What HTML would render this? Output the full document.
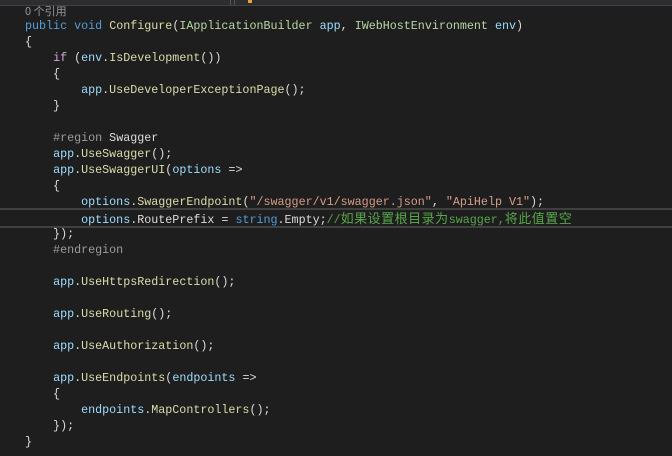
<!DOCTYPE html>
<html><head><meta charset="utf-8"><style>
body{margin:0;width:672px;height:455px;background:#1e1e1e;overflow:hidden;position:relative;font-family:"Liberation Mono","Noto Sans CJK SC",monospace;font-size:11.7px;color:#dcdcdc}
.top{position:absolute;left:0;top:0;width:672px;height:5px;background:#2d2d30;border-bottom:1px solid #3f3f46}
.w{position:absolute;left:0;top:1px;width:672px;height:455px}
.l{position:absolute;left:25px;height:16px;line-height:16px;white-space:pre}
.k{color:#569cd6}.c{color:#d8a0df}.t{color:#b8d7a3}.m{color:#dcdcaa}.v{color:#9cdcfe}.s{color:#d69d85}.g{color:#57a64a}.p{color:#9b9b9b}
.cj{font-family:"Noto Sans CJK SC",sans-serif;font-size:13px;letter-spacing:0.5px}
.hl{position:absolute;left:0;top:207px;width:672px;height:16px;border-top:2px solid #404040;border-bottom:2px solid #404040}
</style></head><body>
<div class="top"></div>
<div style="position:absolute;left:230px;top:0;width:1px;height:5px;background:#555"></div>
<div style="position:absolute;left:234px;top:0;width:1px;height:5px;background:#555"></div>
<div style="position:absolute;left:248px;top:0;width:4px;height:3px;background:#e8a33a"></div>
<div class="w">
<div class="l cj" style="top:2px;font-size:11px;color:#999;letter-spacing:0">0 个引用</div>
<div class="hl"></div>
<div class="l" style="top:17px"><span class="k">public</span> <span class="k">void</span> <span class="m">Configure</span>(<span class="t">IApplicationBuilder</span> <span class="v">app</span>, <span class="t">IWebHostEnvironment</span> <span class="v">env</span>)</div>
<div class="l" style="top:33px">{</div>
<div class="l" style="top:49px">    <span class="c">if</span> (<span class="v">env</span>.<span class="m">IsDevelopment</span>())</div>
<div class="l" style="top:65px">    {</div>
<div class="l" style="top:81px">        <span class="v">app</span>.<span class="m">UseDeveloperExceptionPage</span>();</div>
<div class="l" style="top:97px">    }</div>
<div class="l" style="top:129px">    <span class="p">#region</span> Swagger</div>
<div class="l" style="top:145px">    <span class="v">app</span>.<span class="m">UseSwagger</span>();</div>
<div class="l" style="top:161px">    <span class="v">app</span>.<span class="m">UseSwaggerUI</span>(<span class="v">options</span> =&gt;</div>
<div class="l" style="top:177px">    {</div>
<div class="l" style="top:193px">        <span class="v">options</span>.<span class="m">SwaggerEndpoint</span>(<span class="s">"/swagger/v1/swagger.json"</span>, <span class="s">"ApiHelp V1"</span>);</div>
<div class="l" style="top:209px">        <span class="v">options</span>.RoutePrefix = <span class="k">string</span>.Empty;<span class="g">//<span class="cj">如果设置根目录为</span>swagger,<span class="cj">将此值置空</span></span></div>
<div class="l" style="top:225px">    });</div>
<div class="l p" style="top:241px">    #endregion</div>
<div class="l" style="top:273px">    <span class="v">app</span>.<span class="m">UseHttpsRedirection</span>();</div>
<div class="l" style="top:305px">    <span class="v">app</span>.<span class="m">UseRouting</span>();</div>
<div class="l" style="top:337px">    <span class="v">app</span>.<span class="m">UseAuthorization</span>();</div>
<div class="l" style="top:369px">    <span class="v">app</span>.<span class="m">UseEndpoints</span>(<span class="v">endpoints</span> =&gt;</div>
<div class="l" style="top:385px">    {</div>
<div class="l" style="top:401px">        <span class="v">endpoints</span>.<span class="m">MapControllers</span>();</div>
<div class="l" style="top:417px">    });</div>
<div class="l" style="top:433px">}</div>
</div>
</body></html>
